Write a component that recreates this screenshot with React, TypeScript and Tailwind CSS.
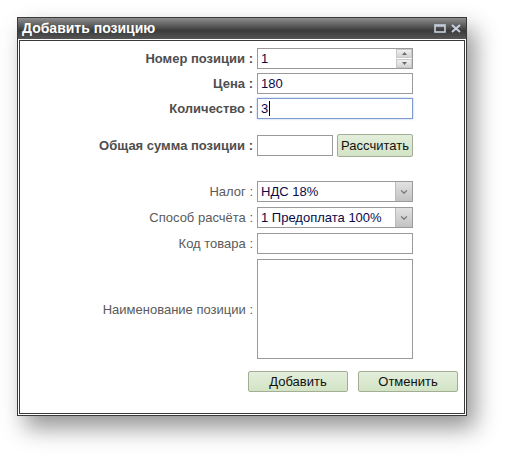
import { ChevronDown } from "lucide-react";

const font = "font-['Liberation_Sans',Arial,sans-serif]";

function Label({ text, bold }: { text: string; bold?: boolean }) {
  return (
    <div
      className={`text-right text-[13px] leading-none ${
        bold ? "font-bold text-[#4e4e4e]" : "text-[#5a5a5a]"
      }`}
    >
      {text}
    </div>
  );
}

function TextInput({ value, focused, wide = true }: { value?: string; focused?: boolean; wide?: boolean }) {
  return (
    <div
      className={`flex h-[21px] items-center border bg-white pl-[3px] text-[13px] text-[#0a0a4a] ${
        wide ? "w-[156px]" : "w-[76px]"
      } ${focused ? "border-[#7f9dcc] shadow-[0_0_2px_#a9c1e8]" : "border-[#9a9a9a]"}`}
    >
      {value}
      {focused && <span className="ml-px h-[15px] w-px bg-black" />}
    </div>
  );
}

function Select({ value }: { value: string }) {
  return (
    <div className="flex h-[21px] w-[156px] border border-[#9a9a9a] bg-white">
      <div className="flex-1 pl-[3px] text-[13px] leading-[19px] text-[#0a0a4a]">{value}</div>
      <div className="flex w-[17px] items-center justify-center border-l border-[#bdbdbd] bg-gradient-to-b from-[#e2e2e2] via-[#d2d2d2] to-[#c2c2c2]">
        <ChevronDown size={10} strokeWidth={3.2} className="text-[#7c7c7c]" />
      </div>
    </div>
  );
}

function GreenButton({ text, className }: { text: string; className: string }) {
  return (
    <button
      className={`h-[21px] rounded-[2px] border border-[#a4ae96] bg-gradient-to-b from-[#e3eedb] to-[#d3e4c5] text-[13px] text-[#111] ${className}`}
    >
      {text}
    </button>
  );
}

export default function App() {
  return (
    <div className={`h-[463px] w-[515px] bg-white pl-[17px] pt-[17px] ${font}`}>
      <div className="w-[450px] border border-[#3a3a3a] bg-white shadow-[8px_12px_22px_rgba(0,0,0,0.42)]">
        {/* title bar */}
        <div className="flex h-[21px] items-center justify-between bg-[linear-gradient(#8e8e8e,#505050_45%,#3b3b3b_60%,#555555)] pl-[4px] pr-[5px]">
          <span className="text-[14px] font-bold text-white">Добавить позицию</span>
          <div className="flex items-center gap-[5px]">
            <svg width="12" height="9" viewBox="0 0 12 9">
              <rect x="1" y="1" width="10" height="7" fill="none" stroke="#c6d2de" strokeWidth="1.6" />
              <line x1="1" y1="2" x2="11" y2="2" stroke="#c6d2de" strokeWidth="1.5" />
            </svg>
            <svg width="10" height="9" viewBox="0 0 10 9">
              <path d="M1 1 L9 8 M9 1 L1 8" stroke="#c6d2de" strokeWidth="2" />
            </svg>
          </div>
        </div>
        <div className="px-px pb-px pt-px">
          <div className="h-[374px] border border-[#3a3a3a] bg-white pt-[7px]">
            <div className="grid grid-cols-[233px_156px] items-center gap-x-[4px] gap-y-[4px]">
              <Label text="Номер позиции :" bold />
              <div className="relative flex h-[21px] w-[156px] border border-[#9a9a9a] bg-white">
                <div className="flex-1 pl-[3px] text-[13px] leading-[19px] text-[#0a0a4a]">1</div>
                <div className="flex w-[16px] flex-col gap-px bg-white">
                  <div className="flex flex-1 items-center justify-center border border-[#c8c8c8] bg-gradient-to-b from-[#f0f0f0] to-[#d4d4d4]">
                    <svg width="5" height="3" viewBox="0 0 5 3"><path d="M0 3 L2.5 0 L5 3Z" fill="#6a6a6a" /></svg>
                  </div>
                  <div className="flex flex-1 items-center justify-center border border-[#c8c8c8] bg-gradient-to-b from-[#f0f0f0] to-[#d4d4d4]">
                    <svg width="5" height="3" viewBox="0 0 5 3"><path d="M0 0 L2.5 3 L5 0Z" fill="#6a6a6a" /></svg>
                  </div>
                </div>
              </div>
              <Label text="Цена :" bold />
              <TextInput value="180" />
              <Label text="Количество :" bold />
              <TextInput value="3" focused />
            </div>

            <div className="mt-[15px] grid grid-cols-[233px_auto] items-center gap-x-[4px]">
              <Label text="Общая сумма позиции :" bold />
              <div className="flex items-center gap-[4px]">
                <TextInput wide={false} />
                <GreenButton text="Рассчитать" className="h-[23px] w-[76px]" />
              </div>
            </div>

            <div className="mt-[24px] grid grid-cols-[233px_156px] items-center gap-x-[4px] gap-y-[5px]">
              <Label text="Налог :" />
              <Select value="НДС 18%" />
              <Label text="Способ расчёта :" />
              <Select value="1 Предоплата 100%" />
              <Label text="Код товара :" />
              <TextInput />
              <Label text="Наименование позиции :" />
              <div className="h-[100px] w-[156px] border border-[#9a9a9a] bg-white" />
            </div>

            <div className="mt-[12px] flex justify-end gap-[10px] pr-[6px]">
              <GreenButton text="Добавить" className="w-[100px]" />
              <GreenButton text="Отменить" className="w-[100px]" />
            </div>
          </div>
        </div>
      </div>
    </div>
  );
}
